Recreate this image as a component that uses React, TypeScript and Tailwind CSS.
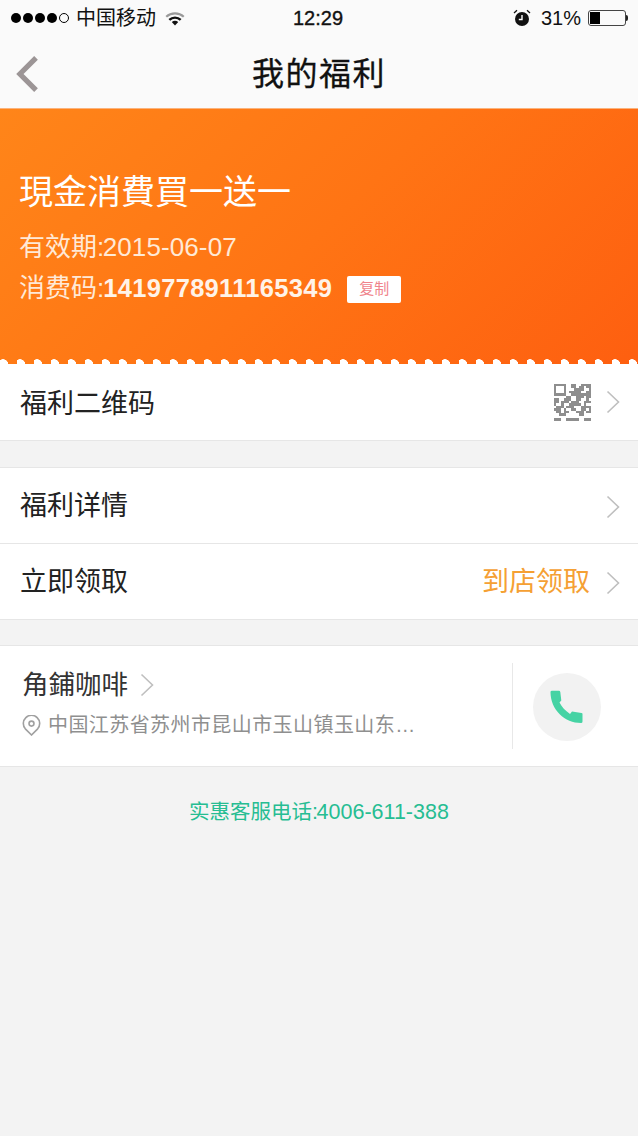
const font = { fontFamily: '"Liberation Sans","Noto Sans CJK SC",sans-serif' };

function Chevron({ className }: { className: string }) {
  return (
    <svg viewBox="0 0 14 24" className={className} fill="none" stroke="#bfbfbf" strokeWidth="1.6">
      <path d="M1.5 1.5 L12.5 12 L1.5 22.5" />
    </svg>
  );
}

const qr = [
  "111110011001111",
  "100010011011011",
  "100010001111001",
  "100010111110011",
  "111110011111111",
  "000001100111011",
  "110011100110010",
  "110111011100111",
  "100100111110100",
  "011101110001111",
  "111010011001101",
  "011011000111011",
  "001110000011000",
  "000000000000000",
  "111001111100111",
];

function Qr() {
  return (
    <svg viewBox="0 0 15 15" className="w-[37px] h-[38px] -mt-[2px] mr-[-1px]" shapeRendering="crispEdges">
      {qr.flatMap((row, y) =>
        row.split("").map((c, x) => (c === "1" ? <rect key={x + "-" + y} x={x} y={y} width="1" height="1" fill="#8e8e8e" /> : null))
      )}
    </svg>
  );
}

function Row({ label, right, border, labelClass, chevronClass }: { label: string; right?: React.ReactNode; border?: boolean; labelClass: string; chevronClass: string }) {
  return (
    <div className={"h-[76px] bg-white flex items-center pl-[20px] pr-[18px] " + (border ? "border-b border-[#e6e6e6]" : "")}>
      <span className={"text-[27px] leading-none text-[#222] " + labelClass}>{label}</span>
      <div className="ml-auto flex items-center">
        {right}
        <Chevron className={"w-[14px] h-[24px] ml-[16px] " + chevronClass} />
      </div>
    </div>
  );
}

export default function App() {
  return (
    <div className="w-[638px] h-[1136px] bg-[#f3f3f3] overflow-hidden" style={font}>
      <div className="h-[108px] bg-[#fafafa] flex flex-col">
        <div className="h-[36px] flex items-center justify-between pl-[11px] pr-[10px] text-[#111]">
          <div className="flex items-center w-[240px]">
            <div className="flex items-center gap-[2px]">
              {[0, 1, 2, 3].map((i) => (
                <span key={i} className="w-[10px] h-[10px] rounded-full bg-black" />
              ))}
              <span className="w-[10px] h-[10px] rounded-full border border-black" />
            </div>
            <span className="text-[20px] leading-none ml-[7px]">中国移动</span>
            <svg viewBox="0 0 20 15" className="w-[20px] h-[15px] ml-[9px]">
              <path d="M0.5 5 A14 14 0 0 1 19.5 5 L18 6.6 A12 12 0 0 0 2 6.6 Z" fill="#9a9a9a" />
              <path d="M3.5 8 A9.5 9.5 0 0 1 16.5 8 L14.8 9.7 A7 7 0 0 0 5.2 9.7 Z" fill="#111" />
              <path d="M6.8 11 A5 5 0 0 1 13.2 11 L10 14.5 Z" fill="#111" />
            </svg>
          </div>
          <span className="text-[20px] leading-none -ml-[3px] [-webkit-text-stroke:0.35px_#111]">12:29</span>
          <div className="flex items-center justify-end w-[240px]">
            <svg viewBox="0 0 18 18" className="w-[18px] h-[18px]">
              <circle cx="9" cy="10" r="7" fill="#111" />
              <path d="M9 6 V10.5 H5.8" stroke="#fff" strokeWidth="1.4" fill="none" />
              <path d="M1 4 L4 1.2 M17 4 L14 1.2" stroke="#111" strokeWidth="1.3" />
            </svg>
            <span className="text-[20px] leading-none ml-[10px]">31%</span>
            <div className="ml-[7px] w-[38px] h-[16px] border border-[#444] rounded-[3px] p-[1px] flex">
              <div className="w-[10px] bg-black" />
            </div>
            <div className="w-[2px] h-[6px] bg-[#222] rounded-r-sm" />
          </div>
        </div>
        <div className="flex-1 flex items-center justify-center relative">
          <svg viewBox="0 0 24 38" className="absolute left-[16px] top-[20px] w-[23px] h-[36px]" fill="none" stroke="#9c9596" strokeWidth="5.5">
            <path d="M21 2 L4 19 L21 36" />
          </svg>
          <span className="text-[32px] leading-none text-[#111] tracking-[1.5px] mt-[4px] [-webkit-text-stroke:0.3px_#111]">我的福利</span>
        </div>
      </div>
      <div className="h-[257px] relative bg-[linear-gradient(135deg,#ff8519_0%,#ff7414_50%,#fe5f10_100%)] border-t border-[#fbb27a] border-b-white border-b text-white pl-[19px] pt-[63px]">
        <div className="text-[34px] leading-[40px]">現金消費買一送一</div>
        <div className="text-[26px] leading-[30px] mt-[20px] text-[#ffe9d6]">
          有效期<span className="tracking-[-1.5px]">:</span><span className="tracking-[0.1px]">2015-06-07</span>
        </div>
        <div className="flex items-center mt-[11px]">
          <span className="text-[26px] leading-[30px] text-[#ffe9d6]">
            消费码<span className="tracking-[-1px]">:</span>
          </span>
          <span className="text-[25.5px] leading-[30px] font-bold tracking-[0.3px] text-[#fff3e8]">1419778911165349</span>
          <span className="ml-[15px] mt-[2px] w-[54px] h-[27px] bg-white rounded-[2px] flex items-center justify-center text-[15px] text-[#f0848c]">复制</span>
        </div>
        <div className="absolute left-0 right-0 bottom-0 h-[6px] bg-[radial-gradient(circle_at_3px_6.5px,#fff_5px,transparent_5.5px)] bg-[length:17px_6px] bg-repeat-x" />
      </div>
      <Row label="福利二维码" border labelClass="mt-[4px]" chevronClass="-mt-[2px]" right={<Qr />} />
      <div className="h-[26px]" />
      <div className="border-t border-[#e6e6e6]">
        <Row label="福利详情" border labelClass="mt-[2px]" chevronClass="mt-[3px]" />
        <Row
          label="立即领取"
          border
          labelClass="mt-[2px]"
          chevronClass="mt-[3px]"
          right={<span className="text-[27px] leading-none mt-[2px] text-[#f5a033]">到店领取</span>}
        />
      </div>
      <div className="h-[25px]" />
      <div className="h-[122px] bg-white border-y border-[#e6e6e6] flex">
        <div className="flex-1 pl-[22px] pt-[26px]">
          <div className="flex items-center">
            <span className="text-[26.5px] leading-none text-[#333]">角鋪咖啡</span>
            <Chevron className="w-[14px] h-[24px] ml-[12px]" />
          </div>
          <div className="flex items-center mt-[16px]">
            <svg viewBox="0 0 20 22" className="w-[19px] h-[21px]" fill="none" stroke="#a0a0a0" strokeWidth="1.7">
              <path d="M10 21 L3.5 14.5 A8.6 8.6 0 1 1 16.5 14.5 Z" />
              <circle cx="10" cy="9" r="2.6" />
            </svg>
            <span className="text-[20px] leading-none text-[#8f8f8f] ml-[7px] tracking-[0.42px]">中国江苏省苏州市昆山市玉山镇玉山东…</span>
          </div>
        </div>
        <div className="w-[126px] my-[17px] border-l border-[#e8e8e8] flex items-center pl-[20px]">
          <div className="w-[68px] h-[68px] mt-[2px] rounded-full bg-[#f2f2f2] flex items-center justify-center">
            <svg viewBox="0 0 34 34" className="w-[34px] h-[34px]">
              <path d="M0.5 2 Q0.5 0.8 2 0.8 L9 0.8 Q10 0.8 10.3 2 L11.3 10.5 L9.5 12.5 C12 17 15 20.5 20 24 L22 21.5 L31.5 23 Q32.5 23.2 32.5 24 L32.5 31.5 Q32.5 33 31 33 C15 33 0.5 20 0.5 2 Z" fill="#46d3a4" />
            </svg>
          </div>
        </div>
      </div>
      <div className="flex justify-center items-baseline leading-none text-[#26bd92] mt-[35px]">
        <span className="text-[20.5px]">实惠客服电话</span>
        <span className="text-[21.5px] whitespace-pre"><span className="tracking-[-1.5px]">:</span>4006-611-388</span>
      </div>
    </div>
  );
}
